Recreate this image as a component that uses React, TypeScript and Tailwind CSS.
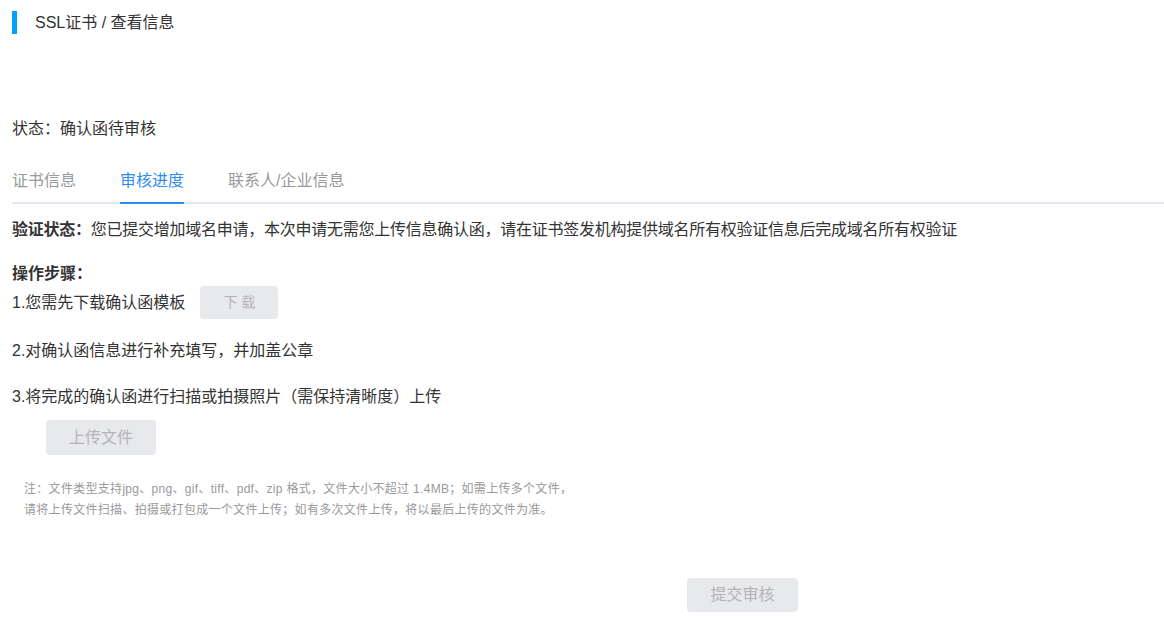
const font = "font-['Liberation_Sans','Noto_Sans_CJK_SC',sans-serif]";

export default function App() {
  const tabs = ['证书信息', '审核进度', '联系人/企业信息'];
  const active = 1;

  return (
    <div className={`w-[1164px] h-[632px] bg-white text-[#333] ${font}`}>
      {/* Breadcrumb */}
      <div className="pl-3 pt-[11px] flex items-center h-[34px]">
        <div className="w-[5px] h-[23px] bg-[#00a0ff]" />
        <span className="ml-[18px] text-[16px] leading-[21px]">SSL证书 / 查看信息</span>
      </div>

      <div className="pl-3">
        <p className="mt-[85px] text-[16px] leading-[20px]">状态：确认函待审核</p>

        {/* Tabs */}
        <div className="mt-[32px] flex gap-[44px] border-b-2 border-[#e4e7ed]">
          {tabs.map((t, i) => (
            <div
              key={t}
              className={
                i === active
                  ? 'pb-[11px] -mb-[2px] border-b-2 border-[#2d8cf0] text-[#2d8cf0] text-[16px] leading-[20px]'
                  : 'pb-[11px] text-[#999] text-[16px] leading-[20px]'
              }
            >
              {t}
            </div>
          ))}
        </div>

        <p className="mt-[16px] text-[16px] leading-[20px] tracking-[-0.25px]">
          <span className="font-bold">验证状态：</span>
          您已提交增加域名申请，本次申请无需您上传信息确认函，请在证书签发机构提供域名所有权验证信息后完成域名所有权验证
        </p>

        <p className="mt-[24px] text-[16px] leading-[20px] font-bold">操作步骤：</p>

        <div className="mt-[2px] flex items-center h-[33px]">
          <span className="text-[16px] leading-[20px]">1.您需先下载确认函模板</span>
          <button className="ml-[15px] w-[78px] h-[33px] rounded bg-[#e8e9ec] text-[#b4b4b4] text-[14px]">
            下 载
          </button>
        </div>

        <p className="mt-[22px] text-[16px] leading-[20px]">2.对确认函信息进行补充填写，并加盖公章</p>
        <p className="mt-[26px] text-[16px] leading-[20px]">3.将完成的确认函进行扫描或拍摄照片（需保持清晰度）上传</p>

        <button className="mt-[13px] ml-[34px] w-[110px] h-[35px] rounded bg-[#e8e9ec] text-[#b4b4b4] text-[16px] block">
          上传文件
        </button>

        <div className="mt-[24px] ml-3 text-[12px] leading-[21px] tracking-[0.3px] text-[#999]">
          <p>注：文件类型支持jpg、png、gif、tiff、pdf、zip 格式，文件大小不超过 1.4MB；如需上传多个文件，</p>
          <p>请将上传文件扫描、拍摄或打包成一个文件上传；如有多次文件上传，将以最后上传的文件为准。</p>
        </div>

        <button className="mt-[57px] ml-[675px] w-[111px] h-[34px] rounded bg-[#e8e9ec] text-[#b4b4b4] text-[16px] block">
          提交审核
        </button>
      </div>
    </div>
  );
}
